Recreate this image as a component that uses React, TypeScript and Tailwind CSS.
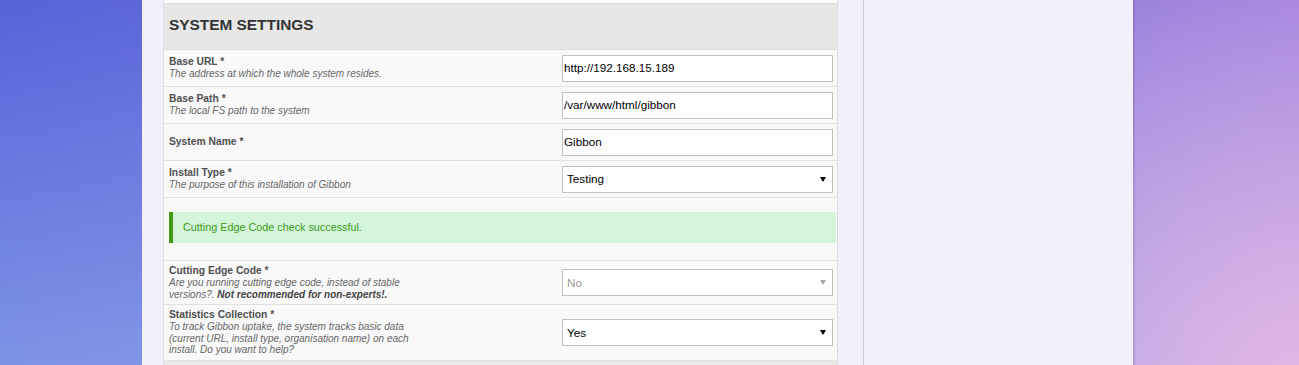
import { ReactNode } from 'react';

function Label({ title, children }: { title: string; children?: ReactNode }) {
    return (
        <div className="pl-[5px]">
            <div className="text-[10.3px] font-bold text-[#4f4f4f] leading-[12px]">{title}</div>
            {children && (
                <div className="text-[10px] italic text-[#666] leading-[11.7px]">{children}</div>
            )}
        </div>
    );
}

function TextBox({ value }: { value: string }) {
    return (
        <div className="h-[27px] w-[271px] bg-white border border-[#c2c2c2] flex items-center px-[1px] text-[11.7px] text-black">
            {value}
        </div>
    );
}

function SelectBox({ value, disabled }: { value: string; disabled?: boolean }) {
    return (
        <div className="h-[27px] w-[271px] bg-white border border-[#c2c2c2] flex items-center justify-between pl-[4px] pr-[6px] text-[11.7px]">
            <span className={disabled ? 'text-[#999]' : 'text-black'}>{value}</span>
            <span
                className={
                    'w-0 h-0 border-l-[3px] border-r-[3px] border-t-[5px] border-l-transparent border-r-transparent ' +
                    (disabled ? 'border-t-[#aaa]' : 'border-t-black')
                }
            />
        </div>
    );
}

function Row({ h, children, field }: { h: string; children: ReactNode; field: ReactNode }) {
    return (
        <div className={'grid grid-cols-[398px_275px] items-center bg-[#f9f9f9] border-b border-[#e1e1e1] ' + h}>
            {children}
            <div>{field}</div>
        </div>
    );
}

function App() {
    return (
        <div className="min-h-screen w-full flex font-['Liberation_Sans',Arial,sans-serif] bg-[radial-gradient(circle_at_100%_100%,rgba(236,186,228,0.85)_0%,rgba(236,186,228,0)_35%),linear-gradient(to_bottom,rgba(170,200,245,0)_0%,rgba(170,200,245,0.5)_100%),linear-gradient(to_right,#5563d8,#9c7fdd)]">
            <div className="ml-[142px] w-[991px] bg-[#f2f0fa] flex shadow-[1px_0_2px_rgba(80,60,140,0.35)]">

                {/* main column */}
                <div className="pl-[21px] w-[696px]">
                    <div className="w-[675px] border-x border-[#dcdcdc]">

                        <div className="h-[4px] bg-white border-b border-[#dcdcdc]" />

                        {/* heading */}
                        <div className="h-[46px] bg-[#e7e7e7] border-b border-[#dcdcdc] flex items-center pl-[5px] pb-[3px]">
                            <h3 className="text-[15.4px] font-bold text-[#333]">SYSTEM SETTINGS</h3>
                        </div>

                        <Row h="h-[37px]" field={<TextBox value="http://192.168.15.189" />}>
                            <Label title="Base URL *">The address at which the whole system resides.</Label>
                        </Row>

                        <Row h="h-[37px]" field={<TextBox value="/var/www/html/gibbon" />}>
                            <Label title="Base Path *">The local FS path to the system</Label>
                        </Row>

                        <Row h="h-[37px]" field={<TextBox value="Gibbon" />}>
                            <Label title="System Name *" />
                        </Row>

                        <Row h="h-[37px]" field={<SelectBox value="Testing" />}>
                            <Label title="Install Type *">The purpose of this installation of Gibbon</Label>
                        </Row>

                        {/* alert */}
                        <div className="h-[63px] bg-[#f9f9f9] border-b border-[#e1e1e1] pt-[14px] pl-[5px] pr-[1px]">
                            <div className="h-[31px] bg-[#d4f5da] border-l-[4px] border-[#3f9a12] flex items-center pl-[10px] text-[10.8px] text-[#3a9a1a]">
                                Cutting Edge Code check successful.
                            </div>
                        </div>

                        <Row h="h-[44px]" field={<SelectBox value="No" disabled />}>
                            <Label title="Cutting Edge Code *">
                                Are you running cutting edge code, instead of stable<br />
                                versions?. <b className="text-[#444]">Not recommended for non-experts!.</b>
                            </Label>
                        </Row>

                        <Row h="h-[56px]" field={<SelectBox value="Yes" />}>
                            <Label title="Statistics Collection *">
                                To track Gibbon uptake, the system tracks basic data<br />
                                (current URL, install type, organisation name) on each<br />
                                install. Do you want to help?
                            </Label>
                        </Row>

                        <div className="h-[20px] bg-[#e9e9e9]" />
                    </div>
                </div>

                {/* sidebar */}
                <div className="ml-[25px] flex-1 border-l border-[#cac7dc]" />
            </div>
        </div>
    );
}

export default App;
